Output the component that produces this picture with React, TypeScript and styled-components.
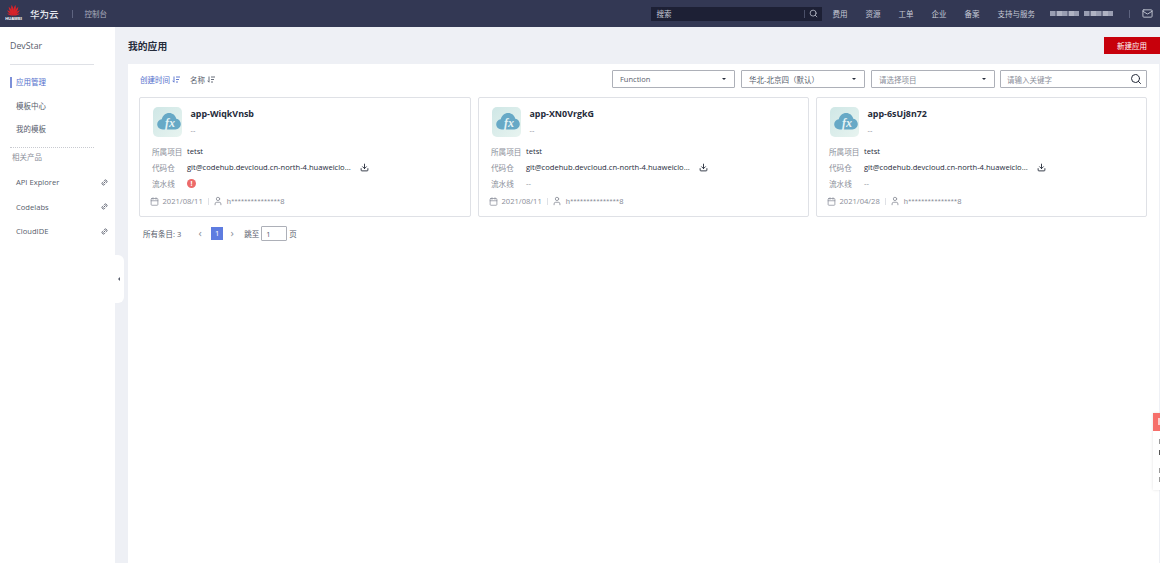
import React from 'react'
import styled, { createGlobalStyle } from 'styled-components'
import { Search, Mail, Download, Calendar, User, Link2 } from 'lucide-react'

const FONT = `"Open Sans", "Noto Sans CJK SC", sans-serif`

const GlobalStyle = createGlobalStyle`
  html, body {
    margin: 0;
    padding: 0;
    height: 100%;
    overflow: hidden;
    font-family: ${FONT};
    background: #eef0f5;
  }
  * { box-sizing: border-box; }
`

const navItems = ['费用', '资源', '工单', '企业', '备案', '支持与服务']

const sideMain = ['应用管理', '模板中心', '我的模板']
const sideLinks = ['API Explorer', 'Codelabs', 'CloudIDE']

type AppCard = {
  name: string
  date: string
  failed?: boolean
}

const cards: AppCard[] = [
  { name: 'app-WiqkVnsb', date: '2021/08/11', failed: true },
  { name: 'app-XN0VrgkG', date: '2021/08/11' },
  { name: 'app-6sUj8n72', date: '2021/04/28' },
]

const petals = [
  { a: -72, s: 0.6 },
  { a: -50, s: 0.75 },
  { a: -29, s: 0.9 },
  { a: -10, s: 1 },
  { a: 10, s: 1 },
  { a: 29, s: 0.9 },
  { a: 50, s: 0.75 },
  { a: 72, s: 0.6 },
]

function HuaweiLogo() {
  return (
    <LogoWrap>
      <svg width="17" height="12" viewBox="0 0 36 26">
        {petals.map(({ a, s }) => (
          <path
            key={a}
            d="M18 25 C14.500 17 14.500 8 18 1 C21.500 8 21.500 17 18 25Z"
            fill="#d8232a"
            transform={`translate(18 25) rotate(${a}) scale(${s}) translate(-18 -25)`}
          />
        ))}
      </svg>
      <LogoText>HUAWEI</LogoText>
    </LogoWrap>
  )
}

function SortIcon() {
  return (
    <svg width="8" height="7" viewBox="0 0 8 7" fill="none" stroke="currentColor" strokeWidth="0.9">
      <path d="M2 0.500V6.200M0.500 4.700L2 6.200" />
      <path d="M4 1H8M4 3.500H7M4 6H6" />
    </svg>
  )
}

function FxIcon() {
  return (
    <FxBox>
      <svg width="24" height="17" viewBox="0 0 25 18">
        <path d="M6 17.5C2.6 17.5 0 15.1 0 12c0-2.800 2-5 4.800-5.400C5.700 2.900 8.800 0 12.700 0c3.700 0 6.700 2.500 7.500 6 2.800.4 4.800 2.800 4.800 5.700 0 3.200-2.600 5.800-5.800 5.800z" fill="#67a9c6" />
      </svg>
      <FxText>fx</FxText>
    </FxBox>
  )
}

function Card({ name, date, failed }: AppCard) {
  return (
    <CardRoot>
      <CardHead>
        <FxIcon />
        <CardTitle>
          <h3>{name}</h3>
          <span>--</span>
        </CardTitle>
      </CardHead>
      <InfoRow>
        <InfoLabel>所属项目</InfoLabel>
        <InfoValue>tetst</InfoValue>
      </InfoRow>
      <InfoRow>
        <InfoLabel>代码仓</InfoLabel>
        <InfoValue>git@codehub.devcloud.cn-north-4.huaweiclo...</InfoValue>
        <DownloadIcon size={9} strokeWidth={2.4} />
      </InfoRow>
      <InfoRow>
        <InfoLabel>流水线</InfoLabel>
        {failed ? <ErrorDot>!</ErrorDot> : <InfoMuted>--</InfoMuted>}
      </InfoRow>
      <CardFoot>
        <Calendar size={9} color="#8a8e99" />
        <span>{date}</span>
        <FootSep />
        <User size={10} color="#8a8e99" />
        <OwnerText>h***************8</OwnerText>
      </CardFoot>
    </CardRoot>
  )
}

export default function App() {
  return (
    <Page>
      <GlobalStyle />
      <TopBar>
        <HuaweiLogo />
        <Brand>华为云</Brand>
        <BrandSep />
        <Console>控制台</Console>
        <TopRight>
          <TopSearch>
            <span>搜索</span>
            <TopSearchIcon>
              <Search size={9} color="#c6cad6" />
            </TopSearchIcon>
          </TopSearch>
          <NavList>
            {navItems.map((n) => (
              <NavItem key={n}>{n}</NavItem>
            ))}
          </NavList>
          <BlurName>
            <i />
            <i />
          </BlurName>
          <TopSep />
          <Mail size={11} color="#c6cad6" />
        </TopRight>
      </TopBar>
      <Body>
        <Sidebar>
          <SideTitle>DevStar</SideTitle>
          <SideMenu>
            {sideMain.map((m, i) => (
              <SideItem key={m} $active={i === 0}>
                {m}
              </SideItem>
            ))}
          </SideMenu>
          <SideDivider />
          <SideGroup>相关产品</SideGroup>
          {sideLinks.map((l) => (
            <SideLink key={l}>
              {l}
              <LinkIcon size={7} strokeWidth={3} />
            </SideLink>
          ))}
          <Collapse />
        </Sidebar>
        <Main>
          <MainHead>
            <h1>我的应用</h1>
            <CreateButton>新建应用</CreateButton>
          </MainHead>
          <Panel>
            <FilterBar>
              <SortLink $active>
                创建时间 <SortIcon />
              </SortLink>
              <SortLink>
                名称 <SortIcon />
              </SortLink>
              <Filters>
                <SelectBox $w={123}>
                  Function
                  <Caret />
                </SelectBox>
                <SelectBox $w={124}>
                  华北-北京四（默认）
                  <Caret />
                </SelectBox>
                <SelectBox $w={124} $muted>
                  请选择项目
                  <Caret />
                </SelectBox>
                <SearchBox>
                  请输入关键字
                  <Search size={12} color="#252b3a" />
                </SearchBox>
              </Filters>
            </FilterBar>
            <CardGrid>
              {cards.map((c) => (
                <Card key={c.name} {...c} />
              ))}
            </CardGrid>
            <Pager>
              <span>所有条目: 3</span>
              <PagerArrow $first>‹</PagerArrow>
              <PageNum>1</PageNum>
              <PagerArrow>›</PagerArrow>
              <span>跳至</span>
              <PageInput>1</PageInput>
              <span>页</span>
            </Pager>
          </Panel>
        </Main>
      </Body>
      <FloatWidget>
        <FloatHead />
        <FloatBody>
          <i />
          <i />
          <i />
          <i />
        </FloatBody>
      </FloatWidget>
    </Page>
  )
}

const Page = styled.div`
  width: 1160px;
  height: 563px;
  display: flex;
  flex-direction: column;
  overflow: hidden;
  position: relative;
`

const TopBar = styled.header`
  height: 27px;
  flex: none;
  background: #333854;
  display: flex;
  align-items: center;
  padding-left: 5px;
  color: #c6cad6;
  font-size: 7.500px;
`

const LogoWrap = styled.div`
  width: 17px;
  display: flex;
  flex-direction: column;
  align-items: center;
  line-height: 1;
  margin-top: -3px;
`

const LogoText = styled.span`
  font-family: "Liberation Sans", sans-serif;
  font-size: 4.200px;
  line-height: 5px;
  font-weight: 700;
  color: #fff;
`

const Brand = styled.div`
  font-size: 9.500px;
  color: #e6e8ee;
  margin-left: 8px;
  font-weight: 500;
`

const BrandSep = styled.div`
  width: 1px;
  height: 8px;
  background: #5e6480;
  margin: 0 12px 0 13px;
`

const Console = styled.div`
  color: #a9adbe;
`

const TopRight = styled.div`
  margin-left: auto;
  display: flex;
  align-items: center;
  padding-right: 7px;
`

const TopSearch = styled.div`
  width: 171px;
  height: 14px;
  margin-right: 11px;
  background: #1d2035;
  display: flex;
  align-items: center;
  justify-content: space-between;
  padding-left: 6px;
`

const TopSearchIcon = styled.div`
  height: 8px;
  border-left: 1px solid #4a4f68;
  padding: 0 4px;
  display: flex;
  align-items: center;
  justify-content: center;
`

const NavList = styled.nav`
  display: flex;
  gap: 18px;
`

const NavItem = styled.span`
  color: #c6cad6;
`

const BlurName = styled.div`
  display: flex;
  gap: 5px;
  margin-left: 15px;
  i {
    display: block;
    width: 29px;
    height: 5px;
    background: repeating-linear-gradient(90deg, #9a9eb2 0 5px, #6d7189 5px 7px, #b0b3c3 7px 12px);
    filter: blur(0.7px);
  }
`

const TopSep = styled.div`
  width: 1px;
  height: 8px;
  background: #5e6480;
  margin: 0 12px 0 16px;
`

const Body = styled.div`
  flex: 1;
  display: flex;
  min-height: 0;
`

const Sidebar = styled.aside`
  width: 115px;
  flex: none;
  background: #fff;
  padding: 13px 0 0 10px;
  position: relative;
`

const SideTitle = styled.div`
  width: 84px;
  height: 25px;
  font-size: 8.800px;
  color: #575d6c;
  border-bottom: 1px solid #dfe1e6;
`

const SideMenu = styled.div`
  margin-top: 6px;
  display: flex;
  flex-direction: column;
`

const SideItem = styled.div<{ $active?: boolean }>`
  height: 23.500px;
  line-height: 23.500px;
  font-size: 7.500px;
  padding-left: 6px;
  color: ${(p) => (p.$active ? '#526ecc' : '#575d6c')};
  position: relative;
  &::before {
    content: '';
    display: ${(p) => (p.$active ? 'block' : 'none')};
    position: absolute;
    left: 0;
    top: 6px;
    width: 2px;
    height: 11px;
    background: #7d90d8;
  }
`

const SideDivider = styled.div`
  width: 84px;
  margin-top: 5px;
  border-top: 1px dotted #c8cad0;
`

const SideGroup = styled.div`
  font-size: 7.500px;
  color: #8a8e99;
  margin-top: 3px;
  padding-left: 2px;
  height: 19.500px;
`

const SideLink = styled.div`
  height: 24.500px;
  display: flex;
  align-items: center;
  justify-content: space-between;
  font-size: 7.600px;
  color: #575d6c;
  padding: 0 7px 0 6px;
`

const LinkIcon = styled(Link2)`
  color: #575d6c;
  transform: rotate(-45deg);
`

const Collapse = styled.div`
  position: absolute;
  right: -9px;
  top: 228px;
  width: 9px;
  height: 48px;
  background: #fff;
  border-radius: 0 6px 6px 0;
  &::after {
    content: '';
    position: absolute;
    left: 3px;
    top: 22px;
    border: 2.500px solid transparent;
    border-left: 0;
    border-right-color: #575d6c;
  }
`

const Main = styled.main`
  flex: 1;
  min-width: 0;
  padding: 10px 0 0 13px;
  display: flex;
  flex-direction: column;
`

const MainHead = styled.div`
  height: 27px;
  display: flex;
  align-items: flex-start;
  justify-content: space-between;
  h1 {
    margin: 2px 0 0;
    font-size: 9.800px;
    line-height: 16px;
    font-weight: 700;
    color: #252b3a;
  }
`

const CreateButton = styled.button`
  width: 56px;
  height: 17px;
  border: 0;
  padding: 0;
  background: #c7000b;
  color: #fff;
  font-family: ${FONT};
  font-size: 7.500px;
`

const Panel = styled.section`
  flex: 1;
  background: #fff;
  margin-right: 1px;
  padding: 6px 12px 0 11px;
`

const FilterBar = styled.div`
  display: flex;
  align-items: center;
  height: 18px;
`

const SortLink = styled.span<{ $active?: boolean }>`
  display: inline-flex;
  align-items: center;
  gap: 2px;
  font-size: 7.500px;
  margin: 0 9px 0 1px;
  color: ${(p) => (p.$active ? '#526ecc' : '#575d6c')};
`

const Filters = styled.div`
  margin-left: auto;
  display: flex;
  gap: 6px;
`

const SelectBox = styled.div<{ $w: number; $muted?: boolean }>`
  width: ${(p) => p.$w}px;
  height: 18px;
  border: 1px solid #adb0b8;
  border-radius: 1px;
  padding: 0 7px;
  display: flex;
  align-items: center;
  justify-content: space-between;
  font-size: 7.500px;
  color: ${(p) => (p.$muted ? '#8a8e99' : '#575d6c')};
`

const Caret = styled.i`
  border: 2.500px solid transparent;
  border-bottom: 0;
  border-top-color: #252b3a;
  margin-right: 1px;
`

const SearchBox = styled.div`
  width: 147px;
  height: 18px;
  margin-left: -1px;
  border: 1px solid #adb0b8;
  border-radius: 1px;
  padding: 0 4px 0 6px;
  display: flex;
  align-items: center;
  justify-content: space-between;
  font-size: 7.500px;
  color: #8a8e99;
`

const CardGrid = styled.div`
  margin-top: 9px;
  display: grid;
  grid-template-columns: 332px 331px 331px;
  gap: 7px;
`

const CardRoot = styled.article`
  height: 120px;
  border: 1px solid #dfe1e6;
  border-radius: 2px;
  padding: 9px 10px 0 13px;
`

const CardHead = styled.div`
  display: flex;
  height: 36px;
`

const FxBox = styled.div`
  width: 29px;
  height: 30px;
  border-radius: 5px;
  background: linear-gradient(135deg, #cfe7e6, #e8f4f0);
  padding: 6px 0 0 4px;
  position: relative;
`

const FxText = styled.span`
  position: absolute;
  left: 12px;
  top: 10px;
  font-family: "Liberation Serif", serif;
  font-style: italic;
  font-weight: 700;
  font-size: 12px;
  line-height: 12px;
  color: #e6f3f4;
`

const CardTitle = styled.div`
  margin-left: 8.500px;
  h3 {
    margin: 0;
    font-size: 8.900px;
    line-height: 14px;
    font-weight: 700;
    color: #252b3a;
  }
  span {
    display: block;
    margin-top: 4px;
    font-size: 7.500px;
    line-height: 11px;
    color: #8a8e99;
  }
`

const InfoRow = styled.div`
  height: 16px;
  margin-left: -1px;
  display: flex;
  align-items: center;
  font-size: 7.600px;
`

const InfoLabel = styled.span`
  width: 35px;
  flex: none;
  color: #8a8e99;
`

const InfoValue = styled.span`
  color: #252b3a;
`

const InfoMuted = styled.span`
  color: #8a8e99;
`

const DownloadIcon = styled(Download)`
  color: #252b3a;
  margin-left: 9px;
`

const ErrorDot = styled.span`
  width: 9px;
  height: 9px;
  border-radius: 50%;
  background: #ec6a6a;
  color: #fff;
  font-size: 7px;
  line-height: 9px;
  font-weight: 700;
  text-align: center;
`

const CardFoot = styled.div`
  height: 18px;
  margin: 1px 0 0 -3.500px;
  display: flex;
  align-items: center;
  gap: 4px;
  font-size: 7.600px;
  color: #8a8e99;
`

const FootSep = styled.div`
  width: 1px;
  height: 7px;
  background: #dfe1e6;
  margin: 0 0 0 1px;
`

const OwnerText = styled.span`
  font-family: "Liberation Sans", sans-serif;
  letter-spacing: 0.3px;
`

const Pager = styled.div`
  margin-top: 8px;
  margin-left: 4px;
  height: 16px;
  display: flex;
  align-items: center;
  font-size: 7.500px;
  color: #575d6c;
`

const PagerArrow = styled.span<{ $first?: boolean }>`
  width: 12px;
  text-align: center;
  font-size: 11px;
  line-height: 12px;
  color: #8a8e99;
  margin: ${(p) => (p.$first ? '0 5px 0 13px' : '0 6px 0 3px')};
`

const PageNum = styled.span`
  width: 12px;
  height: 13px;
  line-height: 13px;
  text-align: center;
  background: #5e7ce0;
  color: #fff;
`

const PageInput = styled.div`
  width: 26px;
  height: 15px;
  margin: 0 2px;
  padding-left: 4px;
  line-height: 14px;
  border: 1px solid #adb0b8;
  border-radius: 1px;
`

const FloatWidget = styled.div`
  position: absolute;
  right: 0;
  top: 413px;
  width: 7px;
  height: 77px;
  background: #fff;
  box-shadow: 0 0 3px rgba(0, 0, 0, 0.12);
`

const FloatHead = styled.div`
  height: 18px;
  background: #f66f6a;
  padding: 5px 0 0 5px;
  &::after {
    content: '';
    display: block;
    width: 2px;
    height: 7px;
    background: #fbd0ce;
  }
`

const FloatBody = styled.div`
  padding: 8px 0 0 6px;
  i {
    display: block;
    width: 1px;
    height: 5px;
    background: #9a9a9a;
    margin-bottom: 4px;
  }
  i:nth-child(1) { margin-bottom: 6px; }
  i:nth-child(2) { margin-bottom: 13px; background: #555; }
`
